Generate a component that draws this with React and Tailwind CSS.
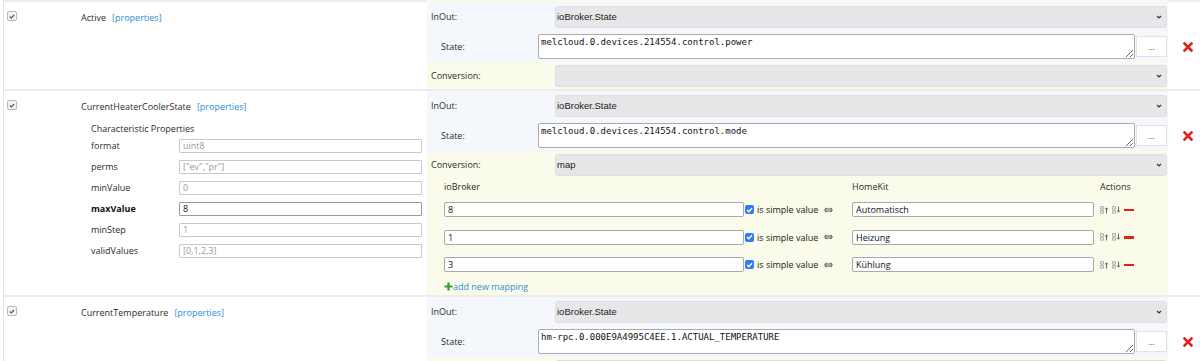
import React from "react";

const BLUE_BG = "bg-[#f4f8fc]";
const YELLOW_BG = "bg-[#fafbea]";

const Check = () => (
  <div className="w-[10px] h-[10px] rounded-[2px] border border-[#b9b9b9] bg-[#f3f3f3] flex items-center justify-center">
    <svg width="6" height="5" viewBox="0 0 6 5">
      <path d="M0.8 2.5 L2.3 3.9 L5.2 1" stroke="#555" strokeWidth="1.1" fill="none" />
    </svg>
  </div>
);

const BlueCheck = () => (
  <div className="w-[9px] h-[9px] rounded-[2px] bg-[#2f7cf6] flex items-center justify-center">
    <svg width="7" height="6" viewBox="0 0 7 6">
      <path d="M1 3 L2.8 4.7 L6 1.2" stroke="#fff" strokeWidth="1.4" fill="none" />
    </svg>
  </div>
);

const RedX = () => (
  <svg width="10" height="10" viewBox="0 0 10 10">
    <path d="M1.5 1.5 L8.5 8.5 M8.5 1.5 L1.5 8.5" stroke="#d8261c" strokeWidth="2.6" strokeLinecap="square" />
  </svg>
);

const Swap = () => (
  <svg width="9" height="6" viewBox="0 0 9 6">
    <path d="M2.5 0.8 L0.6 3 L2.5 5.2 M6.5 0.8 L8.4 3 L6.5 5.2 M1.2 2 H7.8 M1.2 4 H7.8" stroke="#444" strokeWidth="0.9" fill="none" />
  </svg>
);

const Select = ({ value }) => (
  <div className="flex-1 h-[22px] flex items-center justify-between rounded-[3px] bg-[#e7e7e9] border border-[#dedee0] pl-[1px] pr-[4px] font-['Liberation_Sans',Arial,sans-serif] text-[9.5px] text-[#222]">
    <span>{value}</span>
    <svg width="6" height="4" viewBox="0 0 6 4">
      <path d="M1 1 L3 3 L5 1" stroke="#333" strokeWidth="1.2" fill="none" />
    </svg>
  </div>
);

const Line = ({ bg, pad, trail, children }) => (
  <div className="flex">
    <div className={`w-[741px] flex items-center pr-[1px] ${bg} ${pad}`}>{children}</div>
    <div className="flex-1 flex items-center pl-[15px]">{trail}</div>
  </div>
);

const SortIcon = ({ up }) => (
  <svg width="9" height="8" viewBox="0 0 9 8">
    <rect x="0.7" y="0.7" width="2.6" height="2.4" fill="none" stroke="#8a8a8a" strokeWidth="0.7" />
    <rect x="0.7" y="4.7" width="2.6" height="2.4" fill="none" stroke="#8a8a8a" strokeWidth="0.7" />
    {up ? (
      <path d="M6.5 7.5 V2 M5.2 3.4 L6.5 1.8 L7.8 3.4" stroke="#555" strokeWidth="0.9" fill="none" />
    ) : (
      <path d="M6.5 0.5 V6 M5.2 4.6 L6.5 6.2 L7.8 4.6" stroke="#555" strokeWidth="0.9" fill="none" />
    )}
  </svg>
);

const properties = [
  ["format", "uint8", false],
  ["perms", '["ev","pr"]', false],
  ["minValue", "0", false],
  ["maxValue", "8", true],
  ["minStep", "1", false],
  ["validValues", "[0,1,2,3]", false],
];

const PropsTable = () => (
  <div className="ml-[10px] mt-[10px]">
    <div className="h-[12px] leading-[12px]">Characteristic Properties</div>
    {properties.map(([k, v, active]) => (
      <div key={k} className="flex items-center h-[21px]">
        <div className={`w-[88px] ${active ? "font-bold text-[#111]" : ""}`}>{k}</div>
        <div
          className={`w-[243px] h-[14px] flex items-center pl-[3px] border rounded-[1px] bg-white ${
            active ? "text-[#111] border-[#9a9a9a]" : "text-[#9a9a9a] border-[#c9c9c9]"
          }`}
        >
          {v}
        </div>
      </div>
    ))}
  </div>
);

const mappings = [
  ["8", "Automatisch"],
  ["1", "Heizung"],
  ["3", "Kühlung"],
];

const Mapping = () => (
  <div className="flex">
    <div className={`w-[741px] pl-[17px] ${YELLOW_BG}`}>
      <div className="flex h-[18px] items-center">
        <div className="w-[408px]">ioBroker</div>
        <div className="w-[248px]">HomeKit</div>
        <div>Actions</div>
      </div>
      {mappings.map(([a, b]) => (
        <div key={b} className="flex items-center h-[27.5px]">
          <div className="w-[300px] h-[15px] flex items-center pl-[3px] bg-white border border-[#a9a9a9] rounded-[2px] text-[#111]">
            {a}
          </div>
          <div className="w-[108px] flex items-center pl-[1px]">
            <BlueCheck />
            <span className="ml-[3px] text-[#222]">is simple value</span>
            <span className="ml-[6px] flex items-center">
              <Swap />
            </span>
          </div>
          <div className="w-[242px] h-[15px] flex items-center pl-[3px] bg-white border border-[#a9a9a9] rounded-[2px] text-[#111]">
            {b}
          </div>
          <div className="ml-[6px] flex items-center gap-[3px]">
            <SortIcon up />
            <SortIcon />
            <div className="w-[10px] h-[2.5px] bg-[#d8261c]" />
          </div>
        </div>
      ))}
      <div className="h-[16.5px] flex items-center text-[#2d8fd5]">
        <svg width="9" height="9" viewBox="0 0 9 9">
          <path d="M4.5 0.5 V8.5 M0.5 4.5 H8.5" stroke="#3b9c37" strokeWidth="2.2" />
        </svg>
        <span>add new mapping</span>
      </div>
    </div>
    <div className="flex-1" />
  </div>
);

const Row = ({ name, state, conversion, props, mapping }) => (
  <div className="flex border-b-2 border-[#ececec]">
    <div className="w-[73px] pl-[3px] pt-[9px]">
      <Check />
    </div>
    <div className="w-[350px] pl-[4px] pt-[10px]">
      <div className="flex items-center h-[12px] leading-[12px]">
        <span>{name}</span>
        <span className="ml-[6px] text-[#2d8fd5]">[properties]</span>
      </div>
      {props && <PropsTable />}
    </div>
    <div className="flex-1 flex flex-col">
      <Line bg={BLUE_BG} pad="pt-[4px] pb-[3px]">
        <div className="w-[128px] pl-[4px]">InOut:</div>
        <Select value="ioBroker.State" />
      </Line>
      <Line bg={BLUE_BG} pad="pt-[3px] pb-[3px]" trail={<RedX />}>
        <div className="w-[111px] pl-[14px]">State:</div>
        <textarea
          readOnly
          value={state}
          className="flex-1 h-[25px] bg-white border border-[#ababab] rounded-[2px] px-[2px] pt-[2px] font-['DejaVu_Sans_Mono',monospace] text-[9px] leading-[11px] text-[#111] outline-none"
        />
        <div className="ml-[1px] w-[31px] h-[21px] bg-white border border-[#e2e2e2] flex items-center justify-center text-[8px] text-[#333]">
          ...
        </div>
      </Line>
      <Line bg={YELLOW_BG} pad="pt-[3px] pb-[2px]">
        <div className="w-[128px] pl-[4px]">Conversion:</div>
        <Select value={conversion} />
      </Line>
      {mapping && <Mapping />}
    </div>
  </div>
);

export default function App() {
  return (
    <div className="w-[1200px] h-[361px] overflow-hidden bg-white font-['Open_Sans',sans-serif] text-[9px] text-[#2b2b2b]">
      <div className="ml-[3px] border-l border-[#e2e2e2]">
        <div className="flex h-[2px]">
          <div className="w-[423px] bg-[#ececec]" />
          <div className={`w-[741px] ${YELLOW_BG}`} />
          <div className="flex-1 bg-[#f1f1f1]" />
        </div>
        <Row name="Active" state="melcloud.0.devices.214554.control.power" conversion="" />
        <Row
          name="CurrentHeaterCoolerState"
          state="melcloud.0.devices.214554.control.mode"
          conversion="map"
          props
          mapping
        />
        <Row name="CurrentTemperature" state="hm-rpc.0.000E9A4995C4EE.1.ACTUAL_TEMPERATURE" conversion="" />
      </div>
    </div>
  );
}
